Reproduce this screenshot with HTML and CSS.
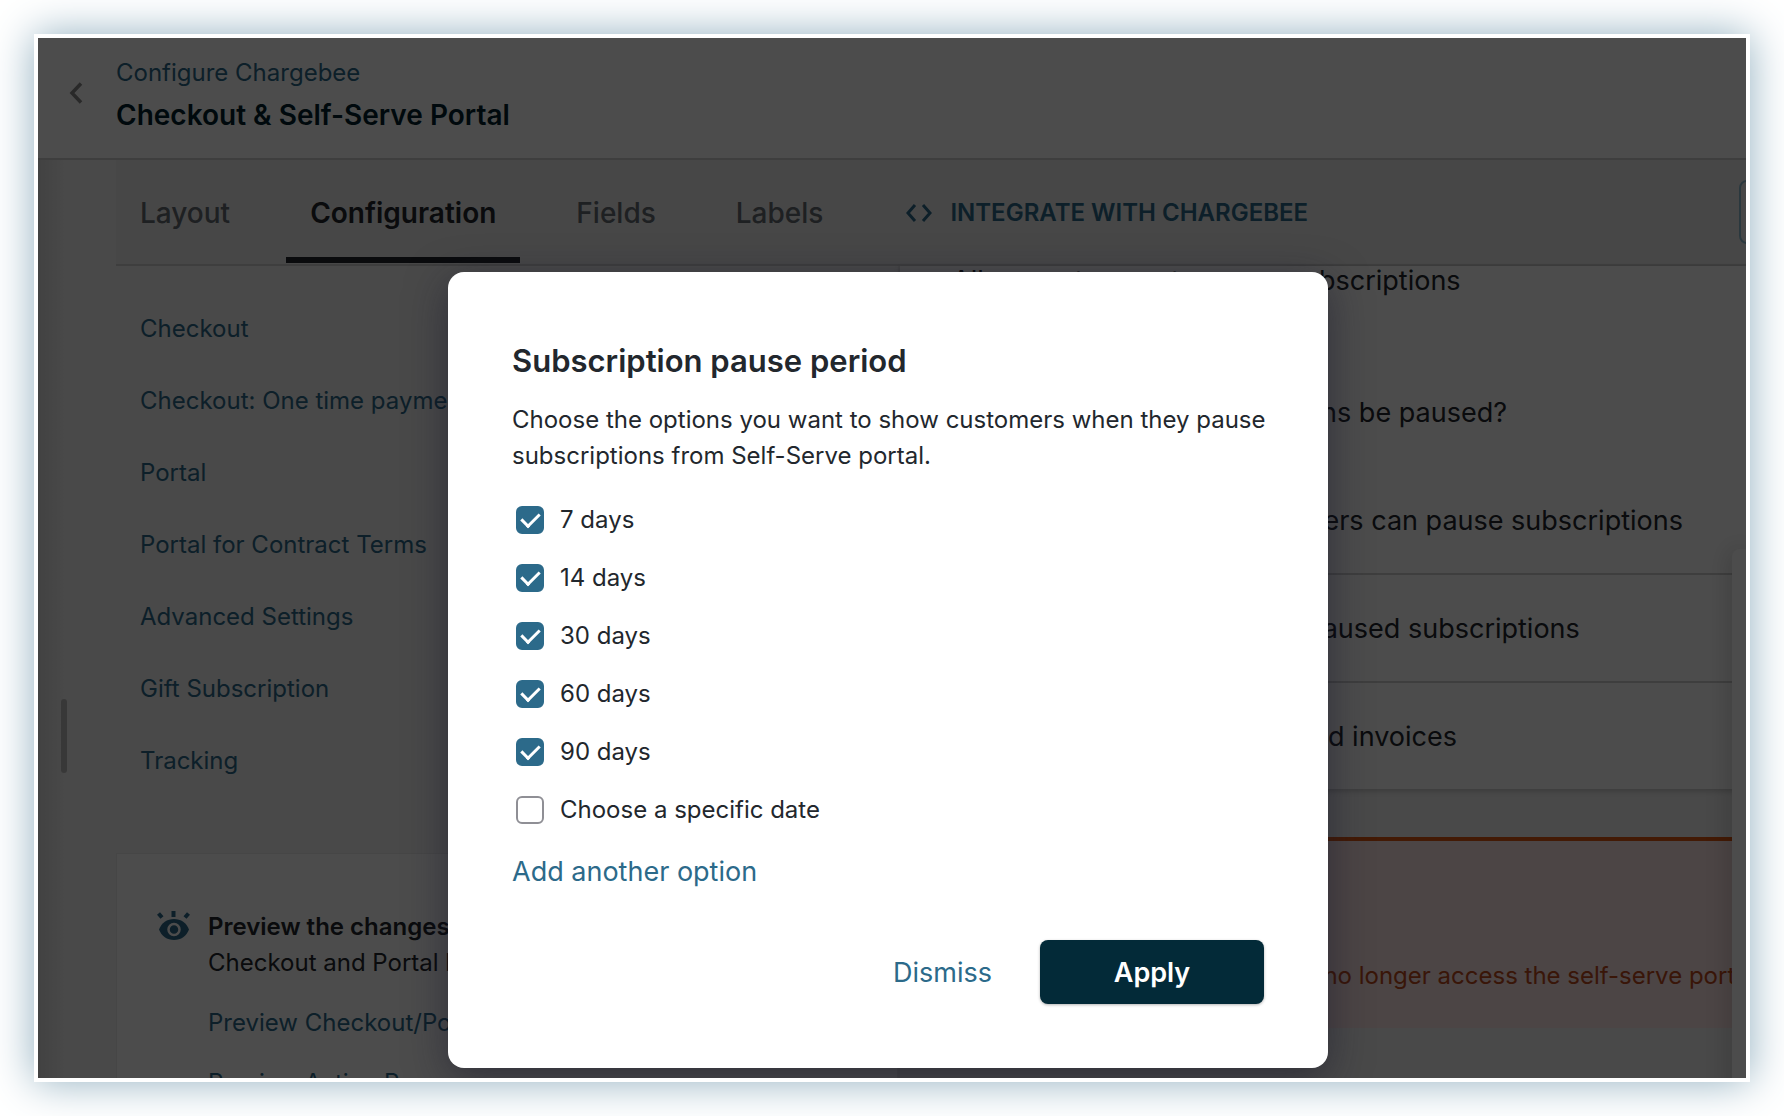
FILE: index.html
```html
<!DOCTYPE html>
<html lang="en">
<head>
    <meta charset="UTF-8">
    <meta name="viewport" content="width=device-width, initial-scale=1.0">
    <title>Checkout &amp; Self-Serve Portal - Chargebee</title>
    <link rel="stylesheet" href="styles.css">
</head>
<body>
    <div class="frame">
        <header class="page-header">
            <a href="#" class="back" aria-label="Back">
                <svg width="14" height="22" viewBox="0 0 14 22" fill="none" stroke="currentColor" stroke-width="3.5"><path d="M12 1.5 3 11l9 9.5"/></svg>
            </a>
            <div>
                <a href="#" class="breadcrumb">Configure Chargebee</a>
                <h1>Checkout &amp; Self-Serve Portal</h1>
            </div>
        </header>

        <div class="page-body">
            <div class="gutter"><div class="handle"></div></div>
            <div class="main">
                <nav class="tabs">
                    <a href="#" class="tab">Layout</a>
                    <a href="#" class="tab active">Configuration</a>
                    <a href="#" class="tab">Fields</a>
                    <a href="#" class="tab">Labels</a>
                    <a href="#" class="integrate">
                        <svg width="26" height="18" viewBox="0 0 26 18" fill="none" stroke="currentColor" stroke-width="3"><path d="M9 1 2 9l7 8M17 1l7 8-7 8"/></svg>
                        INTEGRATE WITH CHARGEBEE
                    </a>
                    <button type="button" class="publish" aria-label="Publish"></button>
                </nav>

                <div class="columns">
                    <aside class="sidebar">
                        <nav class="menu">
                            <a href="#">Checkout</a>
                            <a href="#">Checkout: One time payments</a>
                            <a href="#">Portal</a>
                            <a href="#">Portal for Contract Terms</a>
                            <a href="#">Advanced Settings</a>
                            <a href="#">Gift Subscription</a>
                            <a href="#">Tracking</a>
                        </nav>
                        <div class="preview">
                            <svg class="eye" width="34" height="30" viewBox="0 0 34 30" fill="none" stroke="currentColor">
                                <path d="M1.500 3.500l3.500 4M16.500 1v6M31.500 3.500l-3.500 4" stroke-width="4"/>
                                <path d="M2 19.500C4.500 13 10 9 17 9s12.500 4 15 10.500C29.500 26 24 30 17 30S4.500 26 2 19.500z" fill="currentColor" stroke="none"/>
                                <circle class="iris" cx="17" cy="19.500" r="5.500" stroke-width="2.500"/>
                            </svg>
                            <div>
                                <strong>Preview the changes</strong>
                                <p>Checkout and Portal look</p>
                                <a href="#">Preview Checkout/Portal</a>
                                <a href="#">Preview Action Pages</a>
                            </div>
                        </div>
                    </aside>

                    <section class="content">
                        <ul class="settings">
                            <li class="first">Allow customers to pause subscriptions</li>
                            <li class="question">For how long can subscriptions be paused?</li>
                            <li>The maximum period customers can pause subscriptions</li>
                            <li>Allow customers to resume paused subscriptions</li>
                            <li>Allow customers to pay unpaid invoices</li>
                        </ul>
                        <div class="alert">
                            <p>If disabled, your customers can no longer access the self-serve portal</p>
                        </div>
                    </section>
                    <div class="drawer"></div>
                </div>
            </div>
        </div>

        <div class="overlay">
            <form class="modal" role="dialog" aria-labelledby="modalTitle">
                <h2 id="modalTitle">Subscription pause period</h2>
                <p>Choose the options you want to show customers when they pause subscriptions from Self-Serve portal.</p>
                <div class="options">
                    <label><input type="checkbox" checked> 7 days</label>
                    <label><input type="checkbox" checked> 14 days</label>
                    <label><input type="checkbox" checked> 30 days</label>
                    <label><input type="checkbox" checked> 60 days</label>
                    <label><input type="checkbox" checked> 90 days</label>
                    <label><input type="checkbox"> Choose a specific date</label>
                </div>
                <a href="#" class="add-option">Add another option</a>
                <div class="actions">
                    <button type="button" class="dismiss">Dismiss</button>
                    <button type="submit" class="apply">Apply</button>
                </div>
            </form>
        </div>
    </div>
</body>
</html>
```

FILE: styles.css
```css
* { box-sizing: border-box; }
body { margin: 0; padding: 34px; height: 100vh; background: #fff; color: #22272d; font-family: Inter, "Liberation Sans", sans-serif; font-size: 24px; line-height: 36px; }
a { color: #2c6a8a; text-decoration: none; }
h1, h2, p, ul { margin: 0; padding: 0; }
button { font-family: inherit; cursor: pointer; }

.frame { position: relative; height: 100%; border: 4px solid #fff; background: #f3f3f3; box-shadow: 0 0 40px #91afbf; overflow: hidden; display: flex; flex-direction: column; }

/* header */
.page-header { flex: none; display: flex; height: 122px; padding-top: 17px; background: #fff; border-bottom: 2px solid #d0d0d0; }
.back { width: 78px; padding: 27px 0 0 31px; color: #8a8a8a; line-height: 0; }
.breadcrumb { display: block; }
h1 { font-size: 28px; font-weight: 600; line-height: 48px; color: #001f2c; }

.page-body { flex: 1; display: flex; min-height: 0; }
.gutter { flex: none; width: 78px; padding: 539px 0 0 23px; background: linear-gradient(to right, #dcdcdc, #f3f3f3 26px); }
.handle { width: 6px; height: 74px; border-radius: 3px; background: #bdbdbd; }
.main { flex: 1; min-width: 0; display: flex; flex-direction: column; }

/* tabs */
.tabs { flex: none; display: flex; align-items: stretch; height: 106px; background: #eee; border-bottom: 2px solid #d0d0d0; white-space: nowrap; overflow: hidden; }
.tab { padding: 35px 24px 0; margin-right: 32px; border-bottom: 6px solid transparent; margin-bottom: 1px; font-size: 28px; font-weight: 500; color: #646b73; }
.tab.active { color: #22272d; font-weight: 600; border-color: #22272d; }
.integrate { display: flex; align-items: center; gap: 18px; margin-left: 27px; padding-top: 2px; font-weight: 600; }
.publish { flex: none; align-self: center; margin-left: auto; margin-right: -113px; width: 120px; height: 64px; border: 2px solid #8dbcd0; border-radius: 8px; background: transparent; }

/* two columns under the tabs */
.columns { flex: 1; display: flex; min-height: 0; position: relative; }
.sidebar { flex: none; width: 784px; border-right: 2px solid #e8e8e8; display: flex; flex-direction: column; }
.menu { padding: 27px 24px 56px; display: flex; flex-direction: column; }
.menu a { line-height: 72px; }
.preview { flex: 1; display: flex; gap: 17px; padding: 55px 40px; background: #fff; border: 1px solid #ececec; }
.preview strong { display: block; font-weight: 600; }
.preview a { display: block; padding-top: 24px; }
.eye { flex: none; margin-top: 1px; color: #2c6a8a; }
.iris { stroke: #fff; }

.content { flex: 1; min-width: 0; }
.settings { list-style: none; background: #fff; box-shadow: 0 2px 6px rgba(0, 0, 0, 0.2); font-size: 27px; white-space: nowrap; }
.settings li { height: 108px; padding: 36px 52px 0; border-bottom: 2px solid #d0d0d0; }
.settings .first { height: 74px; padding-top: 0; border: 0; line-height: 30px; }
.settings .question { height: 127px; padding-top: 55px; border: 0; }
.settings li:last-child { height: 106px; border: 0; }
.alert { margin-top: 48px; height: 191px; padding: 117px 60px 0; background: #fde6e6; border-top: 4px solid #df5711; color: #c04a1c; white-space: nowrap; }
.drawer { position: absolute; right: 0; top: 283px; bottom: -20px; width: 14px; background: #fff; border-radius: 8px 0 0 0; box-shadow: 0 0 24px rgba(0, 0, 0, 0.25); }

/* modal */
.overlay { position: absolute; inset: 0; padding: 234px 8px 0 0; background: rgba(0, 0, 0, 0.7); display: flex; justify-content: center; align-items: flex-start; }
.modal { width: 880px; padding: 64px; border-radius: 16px; background: #fff; box-shadow: 0 10px 40px rgba(20, 20, 40, 0.5); }
.modal h2 { padding-bottom: 16px; font-size: 31px; font-weight: 600; line-height: 50px; }
.modal p { margin-right: -16px; }
.options { display: flex; flex-direction: column; padding: 17px 0 15px 4px; }
.options label { display: flex; align-items: center; gap: 16px; height: 58px; }
.options input { appearance: none; width: 28px; height: 28px; margin: 0; border: 2px solid #8f8f95; border-radius: 6px; }
.options input:checked { display: grid; place-items: center; background: #2c6a8a; border-color: #2c6a8a; }
.options input:checked::after { content: ""; width: 8px; height: 15px; margin-bottom: 4px; border: solid #fff; border-width: 0 3px 3px 0; transform: rotate(45deg); }
.add-option { font-size: 27px; }
.actions { display: flex; justify-content: flex-end; align-items: center; gap: 48px; padding-top: 49px; }
.dismiss { padding: 0; border: 0; background: none; color: #2c6a8a; font-size: 27px; }
.apply { width: 224px; height: 64px; border: 0; border-radius: 8px; background: #032a38; color: #fff; font-size: 27px; font-weight: 600; box-shadow: 0 1px 3px rgba(0, 0, 0, 0.3); }
```
